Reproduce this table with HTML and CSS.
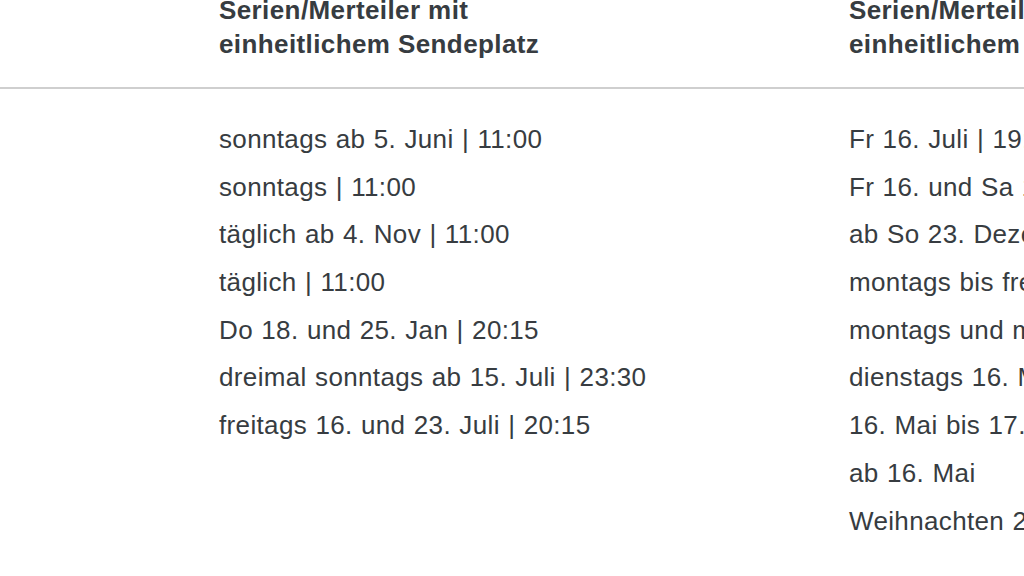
FILE: index.html
```html
<!DOCTYPE html>
<html lang="de">
<head>
<meta charset="utf-8">
<link rel="stylesheet" href="styles.css">
<title>Sendeplätze</title>
</head>
<body>
<div class="table">
  <div class="head">
    <div class="spacer"></div>
    <div class="th">Serien/Merteiler mit<br>einheitlichem Sendeplatz</div>
    <div class="th">Serien/Merteiler mit<br>einheitlichem Sendeplatz</div>
  </div>
  <div class="body">
    <div class="spacer"></div>
    <div class="col">
      <div class="cell">sonntags ab 5. Juni | 11:00</div>
      <div class="cell">sonntags | 11:00</div>
      <div class="cell">täglich ab 4. Nov | 11:00</div>
      <div class="cell">täglich | 11:00</div>
      <div class="cell">Do 18. und 25. Jan | 20:15</div>
      <div class="cell">dreimal sonntags ab 15. Juli | 23:30</div>
      <div class="cell">freitags 16. und 23. Juli | 20:15</div>
    </div>
    <div class="col">
      <div class="cell">Fr 16. Juli | 19:30</div>
      <div class="cell">Fr 16. und Sa 17. Juli | 20:15</div>
      <div class="cell">ab So 23. Dezember | 11:00</div>
      <div class="cell">montags bis freitags | 11:00</div>
      <div class="cell">montags und mittwochs | 20:15</div>
      <div class="cell">dienstags 16. Mai | 20:15</div>
      <div class="cell">16. Mai bis 17. Juni</div>
      <div class="cell">ab 16. Mai</div>
      <div class="cell">Weihnachten 2023</div>
    </div>
  </div>
</div>
</body>
</html>
```
FILE: styles.css
```css
html, body {
  margin: 0;
  padding: 0;
  background: #ffffff;
  overflow: hidden;
}
body {
  width: 1024px;
  height: 576px;
  font-family: "Liberation Sans", Arial, sans-serif;
  color: #373c41;
}
.table {
  margin-top: -7px;
  width: 1024px;
  overflow: hidden;
}
.head, .body {
  display: grid;
  grid-template-columns: 219px 630px 630px;
}
.head {
  border-bottom: 2px solid #cfcfcf;
}
.th {
  font-size: 26px;
  font-weight: bold;
  letter-spacing: 0.4px;
  line-height: 34px;
  padding-bottom: 26px;
  white-space: nowrap;
}
.body {
  padding-top: 26px;
}
.col {
  display: flex;
  flex-direction: column;
}
.cell {
  font-size: 26px;
  line-height: 36px;
  letter-spacing: 0.35px;
  word-spacing: 0.8px;
  padding: 6px 0 5.7px;
  white-space: nowrap;
}
```
